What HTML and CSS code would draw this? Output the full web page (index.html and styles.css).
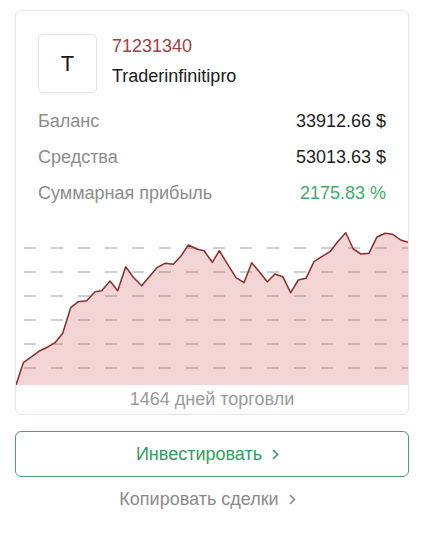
FILE: index.html
```html
<!DOCTYPE html>
<html lang="ru">
<head>
<meta charset="utf-8">
<link rel="stylesheet" href="styles.css">
</head>
<body>
<div class="page">
  <div class="card">
    <div class="head">
      <div class="avatar">T</div>
      <div class="ident">
        <div class="acc">71231340</div>
        <div class="name">Traderinfinitipro</div>
      </div>
    </div>
    <div class="stats">
      <div class="row"><span class="lbl">Баланс</span><span class="val">33912.66 $</span></div>
      <div class="row"><span class="lbl">Средства</span><span class="val">53013.63 $</span></div>
      <div class="row"><span class="lbl">Суммарная прибыль</span><span class="val pos">2175.83 %</span></div>
    </div>
    <svg class="chart" width="392" height="161" viewBox="0 0 392 161">
      <g class="grid">
        <line x1="8" y1="24" x2="392" y2="24"/>
        <line x1="8" y1="48" x2="392" y2="48"/>
        <line x1="8" y1="72" x2="392" y2="72"/>
        <line x1="8" y1="96" x2="392" y2="96"/>
        <line x1="8" y1="120" x2="392" y2="120"/>
        <line x1="8" y1="144" x2="392" y2="144"/>
      </g>
      <path class="area" d="M0,161 L7.3,138.7 15.7,132.7 24,126.7 32.3,122.7 39,118.7 46.7,109.3 54.7,83.7 62.3,77.7 70.7,76.7 79,67.7 85.7,66.7 94,57 101.7,66.7 109.7,42.7 117.3,53.3 125.7,61.7 133.3,52.7 141.3,43.3 149,39.3 157.3,40.3 165,32 172.3,21 180.7,25 188,26.7 196.3,38.3 203.3,26.7 211.7,40.3 220,53.7 228,58.7 235.7,38.7 243.3,47.7 251.3,57.7 259,50 266.7,52.7 274.7,68.7 282.3,56 290,54.3 298,37.7 305.7,32.7 314,27.7 321.7,17.7 329.7,8.7 337.3,25 345,30 353,29.3 360.7,13.3 369,9.3 376.7,10.3 384.7,16 391.3,18 392,18 L392,161 Z"/>
      <polyline class="line" points="0,161 7.3,138.7 15.7,132.7 24,126.7 32.3,122.7 39,118.7 46.7,109.3 54.7,83.7 62.3,77.7 70.7,76.7 79,67.7 85.7,66.7 94,57 101.7,66.7 109.7,42.7 117.3,53.3 125.7,61.7 133.3,52.7 141.3,43.3 149,39.3 157.3,40.3 165,32 172.3,21 180.7,25 188,26.7 196.3,38.3 203.3,26.7 211.7,40.3 220,53.7 228,58.7 235.7,38.7 243.3,47.7 251.3,57.7 259,50 266.7,52.7 274.7,68.7 282.3,56 290,54.3 298,37.7 305.7,32.7 314,27.7 321.7,17.7 329.7,8.7 337.3,25 345,30 353,29.3 360.7,13.3 369,9.3 376.7,10.3 384.7,16 391.3,18 392,18"/>
    </svg>
    <div class="foot">1464 дней торговли</div>
  </div>
  <a class="invest">Инвестировать<svg class="chev" width="16" height="11" viewBox="0 0 16 11"><polyline points="1,1 5.5,5.5 1,10"/></svg></a>
  <a class="copy">Копировать сделки<svg class="chev" width="16" height="11" viewBox="0 0 16 11"><polyline points="1,1 5.5,5.5 1,10"/></svg></a>
</div>
</body>
</html>
```
FILE: styles.css
```css
* { box-sizing: border-box; }
html, body { margin: 0; padding: 0; background: #fff; }
body {
  font-family: "Liberation Sans", Arial, sans-serif;
  font-size: 18px;
  color: #1f1f1f;
}
.page {
  width: 394px;
  margin-left: 15px;
  padding-top: 10px;
}
.card {
  border: 1px solid #e6e6e6;
  border-radius: 6px;
  overflow: hidden;
}
.head {
  display: flex;
  align-items: flex-start;
  gap: 15px;
  padding: 23px 22px 0 22px;
}
.avatar {
  width: 59px;
  height: 59px;
  border: 1px solid #e4e4e4;
  border-radius: 5px;
  display: flex;
  align-items: center;
  justify-content: center;
  font-size: 22px;
  color: #1a1a1a;
  flex: none;
}
.ident {
  margin-top: -2px;
  line-height: 28px;
}
.acc { color: #a5403d; }
.name { color: #1a1a1a; padding-top: 2px; }
.stats {
  padding: 9.5px 22px 0 22px;
}
.row {
  display: flex;
  justify-content: space-between;
  line-height: 36px;
}
.lbl { color: #8c8c8c; }
.val { color: #1f1f1f; }
.val.pos { color: #3ead68; }
.chart {
  display: block;
  margin-top: 13.5px;
}
.grid line {
  stroke: #cfcfcf;
  stroke-width: 2;
  stroke-dasharray: 12 15;
}
.area { fill: rgba(205, 80, 80, 0.24); }
.line {
  fill: none;
  stroke: #8e2b2b;
  stroke-width: 1.5;
  stroke-linejoin: round;
}
.foot {
  text-align: center;
  line-height: 29px;
  color: #9a9a9a;
}
.invest {
  display: flex;
  align-items: center;
  justify-content: center;
  gap: 10px;
  margin-top: 16px;
  height: 46px;
  border: 1px solid #4aa068;
  border-radius: 6px;
  color: #2f9e5c;
}
.copy {
  display: flex;
  align-items: center;
  justify-content: center;
  gap: 10px;
  margin-top: 4px;
  height: 36px;
  color: #8a8a8a;
}
.chev polyline {
  fill: none;
  stroke: currentColor;
  stroke-width: 1.6;
}
```
